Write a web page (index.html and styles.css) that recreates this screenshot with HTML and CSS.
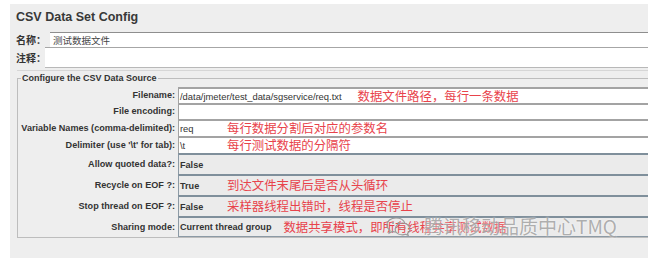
FILE: index.html
```html
<!DOCTYPE html>
<html lang="zh-CN">
<head>
<meta charset="utf-8">
<title>CSV Data Set Config</title>
<link rel="stylesheet" href="styles.css">
</head>
<body>
<div class="panel">
  <h1 class="title">CSV Data Set Config</h1>
  <div class="row name-row">
    <span class="cjk-lbl name-lbl">名称：</span>
    <div class="input">测试数据文件</div>
  </div>
  <div class="row comment-row">
    <span class="cjk-lbl comment-lbl">注释：</span>
    <div class="input comment-input"></div>
  </div>
  <div class="sep"></div>
  <fieldset class="box">
    <legend class="legend">Configure the CSV Data Source</legend>
    <div class="grid">
      <div class="lab">Filename:</div>
      <div class="tf"><span>/data/jmeter/test_data/sgservice/req.txt</span><span class="note note-file">数据文件路径，每行一条数据</span></div>

      <div class="lab">File encoding:</div>
      <div class="tf"></div>

      <div class="lab">Variable Names (comma-delimited):</div>
      <div class="tf"><span class="v">req</span><span class="note">每行数据分割后对应的参数名</span></div>

      <div class="lab">Delimiter (use '\t' for tab):</div>
      <div class="tf"><span class="v">\t</span><span class="note">每行测试数据的分隔符</span></div>

      <div class="lab">Allow quoted data?:</div>
      <div class="cb"><span class="v">False</span></div>

      <div class="lab">Recycle on EOF ?:</div>
      <div class="cb"><span class="v">True</span><span class="note">到达文件末尾后是否从头循环</span></div>

      <div class="lab">Stop thread on EOF ?:</div>
      <div class="cb"><span class="v">False</span><span class="note">采样器线程出错时，线程是否停止</span></div>

      <div class="lab">Sharing mode:</div>
      <div class="cb cb-last"><span>Current thread group</span><span class="note note-share">数据共享模式，即所有线程共享测试数据</span></div>
    </div>
  </fieldset>
  <div class="watermark">
    <svg class="wm-icon" width="26" height="20" viewBox="0 0 26 20" aria-hidden="true">
      <path d="M10 2 C4.5 2 1 5.2 1 9 C1 11.2 2.2 13 4 14.2 L3.2 17 L6.4 15.4 C7.5 15.8 8.7 16 10 16" fill="none" stroke="#9a9a9a" stroke-width="1.2"/>
      <path d="M10 16 C9.4 15 9.2 14 9.2 13 C9.2 9.6 12.4 7 16.5 7 C20.6 7 24 9.6 24 13 C24 14.8 23 16.3 21.6 17.3 L22.2 19.4 L19.6 18.3 C18.6 18.6 17.6 18.8 16.5 18.8 C13.6 18.8 11.2 17.7 10 16" fill="none" stroke="#9a9a9a" stroke-width="1.2"/>
      <path d="M10 2 C14.5 2 18 4.3 18.8 7.2" fill="none" stroke="#9a9a9a" stroke-width="1.2"/>
      <circle cx="7" cy="7" r="1" fill="#9a9a9a"/>
      <circle cx="12.5" cy="7" r="1" fill="#9a9a9a"/>
      <circle cx="14" cy="12" r="0.8" fill="#9a9a9a"/>
      <circle cx="19" cy="12" r="0.8" fill="#9a9a9a"/>
    </svg>
    <span class="wm-text">腾讯移动品质中心TMQ</span>
  </div>
</div>
</body>
</html>
```

FILE: styles.css
```css
html, body {
  margin: 0;
  padding: 0;
}

body {
  width: 653px;
  height: 264px;
  overflow: hidden;
  background: #ffffff;
  font-family: "Liberation Sans", Arial, sans-serif;
  color: #333333;
}

.panel {
  position: relative;
  margin: 4px 5px 0 10px;
  height: 254px;
  padding-left: 6px;
  background: #eeeeee;
  overflow: hidden;
  box-sizing: border-box;
}

.title {
  margin: 0;
  padding-top: 6px;
  font-size: 12.5px;
  line-height: 15px;
  font-weight: bold;
  color: #383838;
}

.row {
  display: flex;
  align-items: stretch;
}

.name-row {
  margin-top: 7px;
  height: 15px;
}

.comment-row {
  height: 21px;
}

.cjk-lbl {
  display: flex;
  align-items: center;
  font-family: "Noto Sans CJK SC", sans-serif;
  font-weight: bold;
  font-size: 10px;
  color: #333333;
  white-space: nowrap;
}

.name-lbl {
  width: 34px;
}

.comment-lbl {
  width: 29px;
}

.input {
  flex: 1;
  display: flex;
  align-items: center;
  padding-left: 3px;
  background: #ffffff;
  border-top: 1px solid #8e8e8e;
  box-sizing: border-box;
  font-family: "Noto Sans CJK SC", sans-serif;
  font-size: 9.5px;
  color: #444444;
}

.comment-input {
  border-top: 1px solid #a6a6a6;
  border-bottom: 1px solid #b8b8b8;
}

.sep {
  margin-top: 2px;
  margin-left: 1px;
  height: 1px;
  background: #d6d6d6;
}

.box {
  margin: 2px -6px 0 1px;
  padding: 3px 0 0 0;
  border: 1px solid #bdbdbd;
  min-width: 0;
}

.legend {
  margin-left: 3px;
  padding: 0 1px;
  font-size: 9px;
  line-height: 11px;
  font-weight: bold;
  color: #333333;
}

.grid {
  display: grid;
  grid-template-columns: 158px 1fr;
  grid-template-rows: 16px 16px 17px 17px 21px 21px 21px 21px;
}

.lab {
  display: flex;
  align-items: center;
  justify-content: flex-end;
  padding-right: 1px;
  font-size: 9.1px;
  font-weight: bold;
  color: #333333;
  white-space: nowrap;
}

.tf,
.cb {
  display: flex;
  align-items: center;
  padding-left: 1px;
  box-sizing: border-box;
  white-space: nowrap;
  overflow: visible;
}

.tf {
  margin-left: 2px;
  background: #ffffff;
  border-top: 2px solid #a3a3a3;
  border-left: 1px solid #a3a3a3;
  font-size: 9.4px;
  color: #333333;
}

.cb {
  margin-left: 2px;
  background: #ebebeb;
  border-top: 2px solid #7f8f9b;
  border-left: 1px solid #8c9aa5;
  font-size: 9.1px;
  font-weight: bold;
  color: #333333;
}

.cb-last {
  border-bottom: 1px solid #8c9aa5;
}

.v {
  display: inline-block;
  width: 47px;
}

.note {
  font-family: "Noto Sans CJK SC", sans-serif;
  font-weight: normal;
  font-size: 12.4px;
  line-height: 1;
  color: #e8434b;
}

.note-file {
  margin-left: 16px;
}

.note-share {
  margin-left: 12px;
}

.watermark {
  position: absolute;
  left: 376px;
  top: 211px;
  display: flex;
  align-items: center;
  gap: 12px;
}

.wm-icon {
  display: block;
}

.wm-text {
  font-family: "Noto Sans CJK SC", sans-serif;
  font-size: 19px;
  line-height: 22px;
  color: rgba(150, 150, 150, 0.75);
  text-shadow: 0 0 2px rgba(255, 255, 255, 0.9);
  white-space: nowrap;
}
```
